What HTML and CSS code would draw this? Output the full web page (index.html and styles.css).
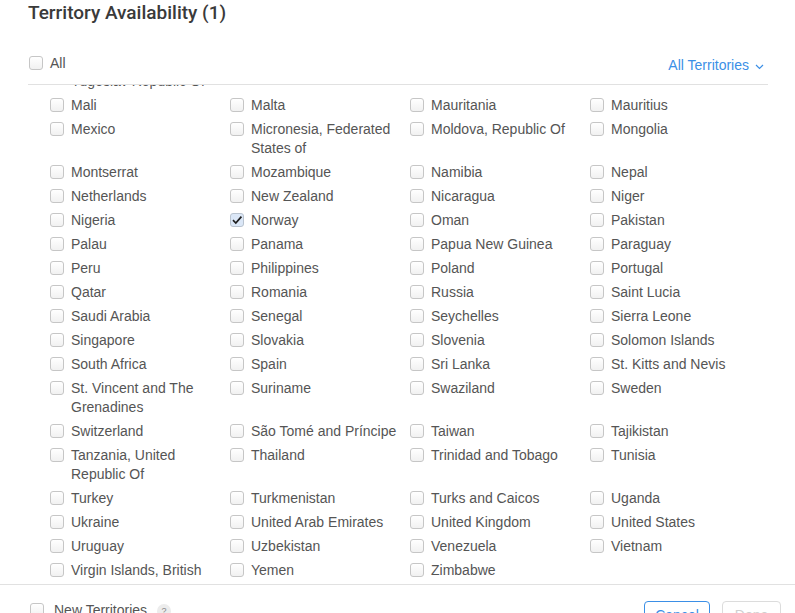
FILE: index.html
```html
<!DOCTYPE html>
<html>
<head>
<meta charset="utf-8">
<link rel="stylesheet" href="styles.css">
</head>
<body>
<div class="page">
  <header class="head">
    <h1 class="title">Territory Availability (1)</h1>
    <div class="all-row">
      <label class="item"><span class="box"></span><span class="label">All</span></label>
      <a class="filter">All Territories <svg class="chev" width="9" height="6" viewBox="0 0 9 6"><path d="M1 1l3.5 3.5L8 1" fill="none" stroke="#3b8fe6" stroke-width="1.2"/></svg></a>
    </div>
  </header>
  <div class="list">
    <div class="grid">
      <label class="item"><span class="box"></span><span class="label">Macedonia, The Former Yugoslav Republic Of</span></label>
      <label class="item"><span class="box"></span><span class="label">Madagascar</span></label>
      <label class="item"><span class="box"></span><span class="label">Malawi</span></label>
      <label class="item"><span class="box"></span><span class="label">Malaysia</span></label>
      <label class="item"><span class="box"></span><span class="label">Mali</span></label>
      <label class="item"><span class="box"></span><span class="label">Malta</span></label>
      <label class="item"><span class="box"></span><span class="label">Mauritania</span></label>
      <label class="item"><span class="box"></span><span class="label">Mauritius</span></label>
      <label class="item"><span class="box"></span><span class="label">Mexico</span></label>
      <label class="item"><span class="box"></span><span class="label">Micronesia, Federated States of</span></label>
      <label class="item"><span class="box"></span><span class="label">Moldova, Republic Of</span></label>
      <label class="item"><span class="box"></span><span class="label">Mongolia</span></label>
      <label class="item"><span class="box"></span><span class="label">Montserrat</span></label>
      <label class="item"><span class="box"></span><span class="label">Mozambique</span></label>
      <label class="item"><span class="box"></span><span class="label">Namibia</span></label>
      <label class="item"><span class="box"></span><span class="label">Nepal</span></label>
      <label class="item"><span class="box"></span><span class="label">Netherlands</span></label>
      <label class="item"><span class="box"></span><span class="label">New Zealand</span></label>
      <label class="item"><span class="box"></span><span class="label">Nicaragua</span></label>
      <label class="item"><span class="box"></span><span class="label">Niger</span></label>
      <label class="item"><span class="box"></span><span class="label">Nigeria</span></label>
      <label class="item"><span class="box checked"><svg width="12" height="12" viewBox="0 0 12 12"><path d="M2 6.2l2.8 2.8L10.4 2.6" fill="none" stroke="#1f1f1f" stroke-width="1.7"/></svg></span><span class="label">Norway</span></label>
      <label class="item"><span class="box"></span><span class="label">Oman</span></label>
      <label class="item"><span class="box"></span><span class="label">Pakistan</span></label>
      <label class="item"><span class="box"></span><span class="label">Palau</span></label>
      <label class="item"><span class="box"></span><span class="label">Panama</span></label>
      <label class="item"><span class="box"></span><span class="label">Papua New Guinea</span></label>
      <label class="item"><span class="box"></span><span class="label">Paraguay</span></label>
      <label class="item"><span class="box"></span><span class="label">Peru</span></label>
      <label class="item"><span class="box"></span><span class="label">Philippines</span></label>
      <label class="item"><span class="box"></span><span class="label">Poland</span></label>
      <label class="item"><span class="box"></span><span class="label">Portugal</span></label>
      <label class="item"><span class="box"></span><span class="label">Qatar</span></label>
      <label class="item"><span class="box"></span><span class="label">Romania</span></label>
      <label class="item"><span class="box"></span><span class="label">Russia</span></label>
      <label class="item"><span class="box"></span><span class="label">Saint Lucia</span></label>
      <label class="item"><span class="box"></span><span class="label">Saudi Arabia</span></label>
      <label class="item"><span class="box"></span><span class="label">Senegal</span></label>
      <label class="item"><span class="box"></span><span class="label">Seychelles</span></label>
      <label class="item"><span class="box"></span><span class="label">Sierra Leone</span></label>
      <label class="item"><span class="box"></span><span class="label">Singapore</span></label>
      <label class="item"><span class="box"></span><span class="label">Slovakia</span></label>
      <label class="item"><span class="box"></span><span class="label">Slovenia</span></label>
      <label class="item"><span class="box"></span><span class="label">Solomon Islands</span></label>
      <label class="item"><span class="box"></span><span class="label">South Africa</span></label>
      <label class="item"><span class="box"></span><span class="label">Spain</span></label>
      <label class="item"><span class="box"></span><span class="label">Sri Lanka</span></label>
      <label class="item"><span class="box"></span><span class="label">St. Kitts and Nevis</span></label>
      <label class="item"><span class="box"></span><span class="label">St. Vincent and The Grenadines</span></label>
      <label class="item"><span class="box"></span><span class="label">Suriname</span></label>
      <label class="item"><span class="box"></span><span class="label">Swaziland</span></label>
      <label class="item"><span class="box"></span><span class="label">Sweden</span></label>
      <label class="item"><span class="box"></span><span class="label">Switzerland</span></label>
      <label class="item"><span class="box"></span><span class="label">São Tomé and Príncipe</span></label>
      <label class="item"><span class="box"></span><span class="label">Taiwan</span></label>
      <label class="item"><span class="box"></span><span class="label">Tajikistan</span></label>
      <label class="item"><span class="box"></span><span class="label">Tanzania, United Republic Of</span></label>
      <label class="item"><span class="box"></span><span class="label">Thailand</span></label>
      <label class="item"><span class="box"></span><span class="label">Trinidad and Tobago</span></label>
      <label class="item"><span class="box"></span><span class="label">Tunisia</span></label>
      <label class="item"><span class="box"></span><span class="label">Turkey</span></label>
      <label class="item"><span class="box"></span><span class="label">Turkmenistan</span></label>
      <label class="item"><span class="box"></span><span class="label">Turks and Caicos</span></label>
      <label class="item"><span class="box"></span><span class="label">Uganda</span></label>
      <label class="item"><span class="box"></span><span class="label">Ukraine</span></label>
      <label class="item"><span class="box"></span><span class="label">United Arab Emirates</span></label>
      <label class="item"><span class="box"></span><span class="label">United Kingdom</span></label>
      <label class="item"><span class="box"></span><span class="label">United States</span></label>
      <label class="item"><span class="box"></span><span class="label">Uruguay</span></label>
      <label class="item"><span class="box"></span><span class="label">Uzbekistan</span></label>
      <label class="item"><span class="box"></span><span class="label">Venezuela</span></label>
      <label class="item"><span class="box"></span><span class="label">Vietnam</span></label>
      <label class="item"><span class="box"></span><span class="label">Virgin Islands, British</span></label>
      <label class="item"><span class="box"></span><span class="label">Yemen</span></label>
      <label class="item"><span class="box"></span><span class="label">Zimbabwe</span></label>
    </div>
  </div>
</div>
<footer class="foot">
  <label class="item new"><span class="box"></span><span class="label">New Territories</span><span class="help">?</span></label>
  <div class="buttons">
    <button class="btn cancel">Cancel</button>
    <button class="btn done" disabled>Done</button>
  </div>
</footer>
</body>
</html>
```
FILE: styles.css
```css
html, body {
  margin: 0;
  padding: 0;
  background: #fff;
  overflow: hidden;
}
body {
  font-family: "Liberation Sans", Arial, sans-serif;
  font-size: 14px;
  color: #555;
  width: 795px;
  height: 613px;
}
.page {
  padding: 0 27px 0 28px;
}
.head {
  height: 84px;
  border-bottom: 1px solid #e1e1e1;
  display: flex;
  flex-direction: column;
}
.title {
  margin: 0;
  font-family: Roboto, "Liberation Sans", Arial, sans-serif;
  font-size: 19px;
  line-height: 26px;
  font-weight: 500;
  color: #3a3a3a;
}
.all-row {
  margin-top: 28px;
  display: flex;
  justify-content: space-between;
  align-items: flex-start;
}
.all-row .item {
  margin-left: 1px;
}
.filter {
  color: #3b8fe6;
  font-size: 14px;
  line-height: 19px;
  margin-top: 2px;
  margin-right: 4px;
  display: flex;
  align-items: center;
  gap: 6px;
}
.chev {
  margin-top: 2px;
}
.item {
  display: flex;
  align-items: flex-start;
  gap: 7px;
  line-height: 19px;
}
.box {
  flex: none;
  width: 12px;
  height: 12px;
  margin-top: 2px;
  border: 1px solid #c6c6c6;
  border-radius: 3px;
  background: linear-gradient(#ffffff, #f1f1f1);
  display: flex;
  align-items: center;
  justify-content: center;
}
.box.checked {
  background: #dbe7f7;
  border-color: #b9c3cf;
}
.box.checked svg {
  margin-top: -1px;
}
.list {
  height: 499px;
  overflow: hidden;
}
.grid {
  display: grid;
  grid-template-columns: repeat(4, 180px);
  row-gap: 5px;
  padding-left: 22px;
  margin-top: -32px;
}
.grid .label {
  max-width: 159px;
}
.foot {
  border-top: 1px solid #e1e1e1;
  display: flex;
  justify-content: space-between;
  align-items: flex-start;
  padding: 16px 14px 0 30px;
}
.new {
  gap: 10px;
}
.help {
  width: 14px;
  height: 14px;
  border-radius: 50%;
  background: #ececec;
  color: #888;
  font-size: 9px;
  line-height: 14px;
  text-align: center;
  margin-top: 3px;
  margin-left: 0;
}
.buttons {
  display: flex;
  gap: 12px;
}
.btn {
  font-family: "Liberation Sans", Arial, sans-serif;
  font-size: 14px;
  height: 28px;
  border-radius: 4px;
  background: #fff;
  padding: 0;
}
.cancel {
  width: 66px;
  border: 1px solid #3b8fe6;
  color: #3b8fe6;
}
.done {
  width: 59px;
  border: 1px solid #dcdcdc;
  color: #cfcfcf;
}
```
